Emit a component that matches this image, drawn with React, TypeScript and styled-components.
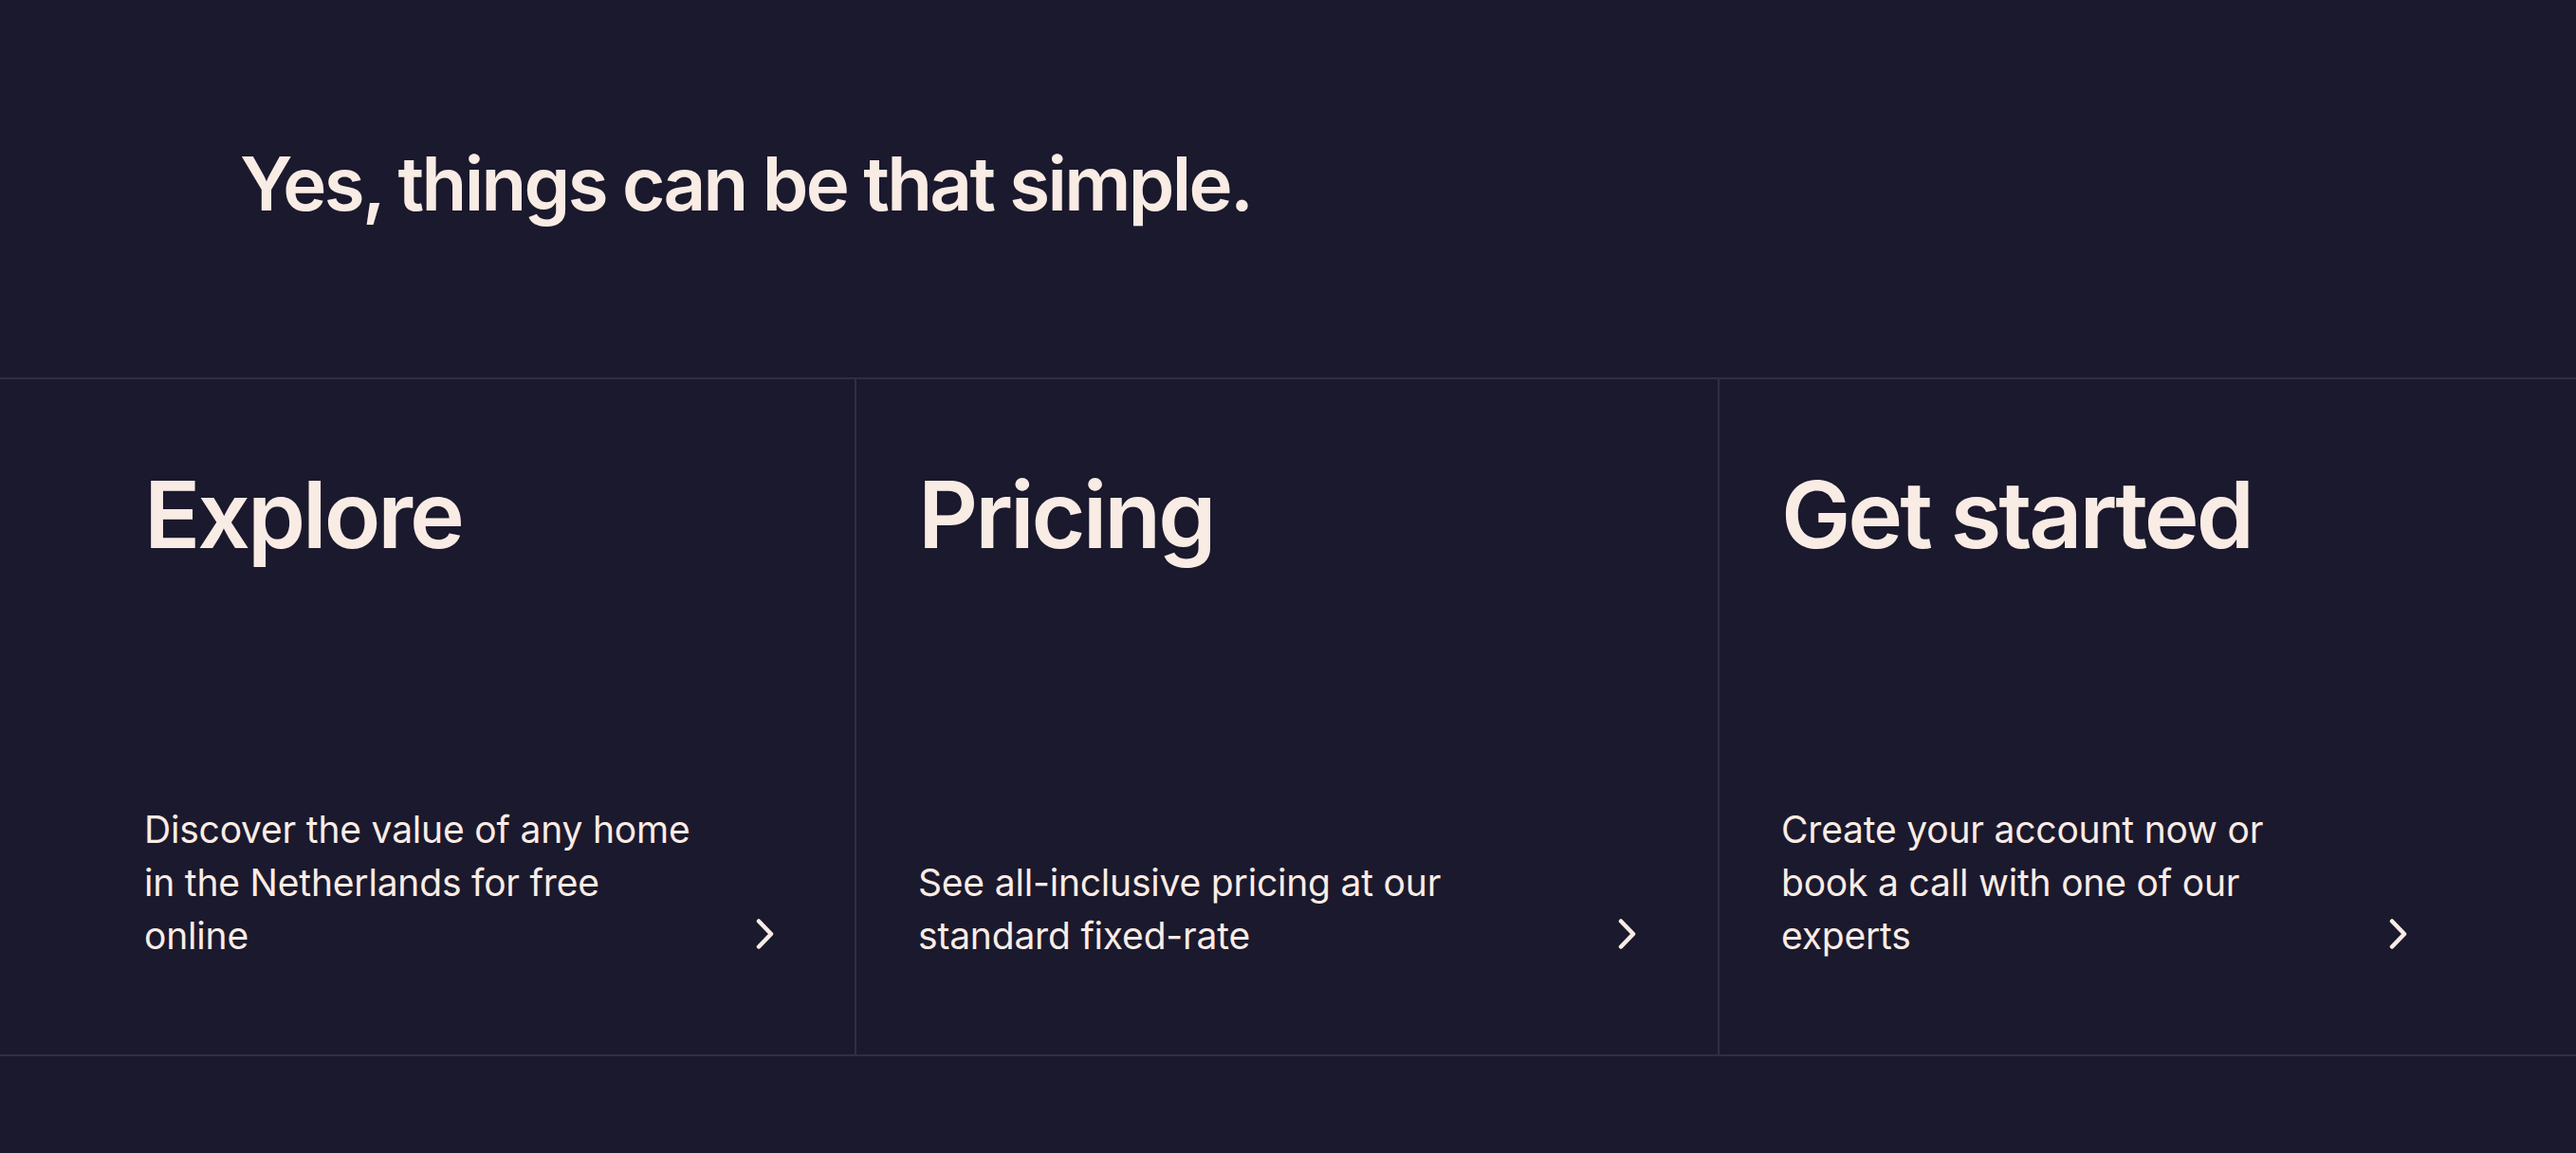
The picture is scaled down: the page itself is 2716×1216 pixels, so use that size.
import styled, { createGlobalStyle } from "styled-components";

const GlobalStyle = createGlobalStyle`
  html, body {
    margin: 0;
    padding: 0;
    background: #1b192d;
  }
  body {
    font-family: Inter, "Noto Sans", "Liberation Sans", sans-serif;
    color: #f9ece5;
    -webkit-font-smoothing: antialiased;
  }
`;

const S_Page = styled.main`
  min-height: 1216px;
  background: #1b192d;
`;

const S_Intro = styled.header`
  padding: 151px 0 161px 253px;
`;

const S_Headline = styled.h2`
  margin: 0;
  font-size: 78px;
  line-height: 1.1;
  font-weight: 600;
  letter-spacing: -0.034em;
`;

const S_Links = styled.section`
  display: grid;
  grid-template-columns: 901px 910px 1fr;
  border-top: 2px solid #302e45;
  border-bottom: 2px solid #302e45;
`;

const S_Card = styled.a<{ $padLeft: number; $padRight: number; $divider?: boolean }>`
  display: flex;
  flex-direction: column;
  justify-content: space-between;
  box-sizing: border-box;
  height: 712px;
  padding: 94px ${(p) => p.$padRight}px 97px ${(p) => p.$padLeft}px;
  border-left: ${(p) => (p.$divider ? "2px solid #302e45" : "none")};
  color: inherit;
  text-decoration: none;
`;

const S_Title = styled.h3`
  margin: 0;
  font-size: 98px;
  line-height: 1;
  font-weight: 600;
  letter-spacing: -0.031em;
`;

const S_Bottom = styled.div`
  display: flex;
  align-items: flex-end;
  justify-content: space-between;
  gap: 40px;
`;

const S_Text = styled.p`
  margin: 0;
  max-width: 590px;
  font-size: 39px;
  line-height: 56px;
  font-weight: 400;
  letter-spacing: -0.005em;
`;

const S_Chevron = styled.svg`
  flex: none;
  width: 20px;
  height: 32px;
  margin-bottom: 14px;
`;

const Chevron = () => (
  <S_Chevron viewBox="0 0 20 32" fill="none">
    <polyline
      points="3,2.5 16,16 3,29.5"
      stroke="currentColor"
      strokeWidth="4.5"
      strokeLinecap="round"
      strokeLinejoin="round"
    />
  </S_Chevron>
);

const cards = [
  {
    title: "Explore",
    text: "Discover the value of any home in the Netherlands for free online",
    padLeft: 152,
    padRight: 84,
  },
  {
    title: "Pricing",
    text: "See all-inclusive pricing at our standard fixed-rate",
    padLeft: 65,
    padRight: 85,
  },
  {
    title: "Get started",
    text: "Create your account now or book a call with one of our experts",
    padLeft: 65,
    padRight: 177,
  },
];

const App = () => {
  return (
    <S_Page>
      <GlobalStyle />
      <S_Intro>
        <S_Headline>Yes, things can be that simple.</S_Headline>
      </S_Intro>
      <S_Links>
        {cards.map((card, i) => (
          <S_Card
            key={card.title}
            href="#"
            $padLeft={card.padLeft}
            $padRight={card.padRight}
            $divider={i > 0}
          >
            <S_Title>{card.title}</S_Title>
            <S_Bottom>
              <S_Text>{card.text}</S_Text>
              <Chevron />
            </S_Bottom>
          </S_Card>
        ))}
      </S_Links>
    </S_Page>
  );
};

export default App;
